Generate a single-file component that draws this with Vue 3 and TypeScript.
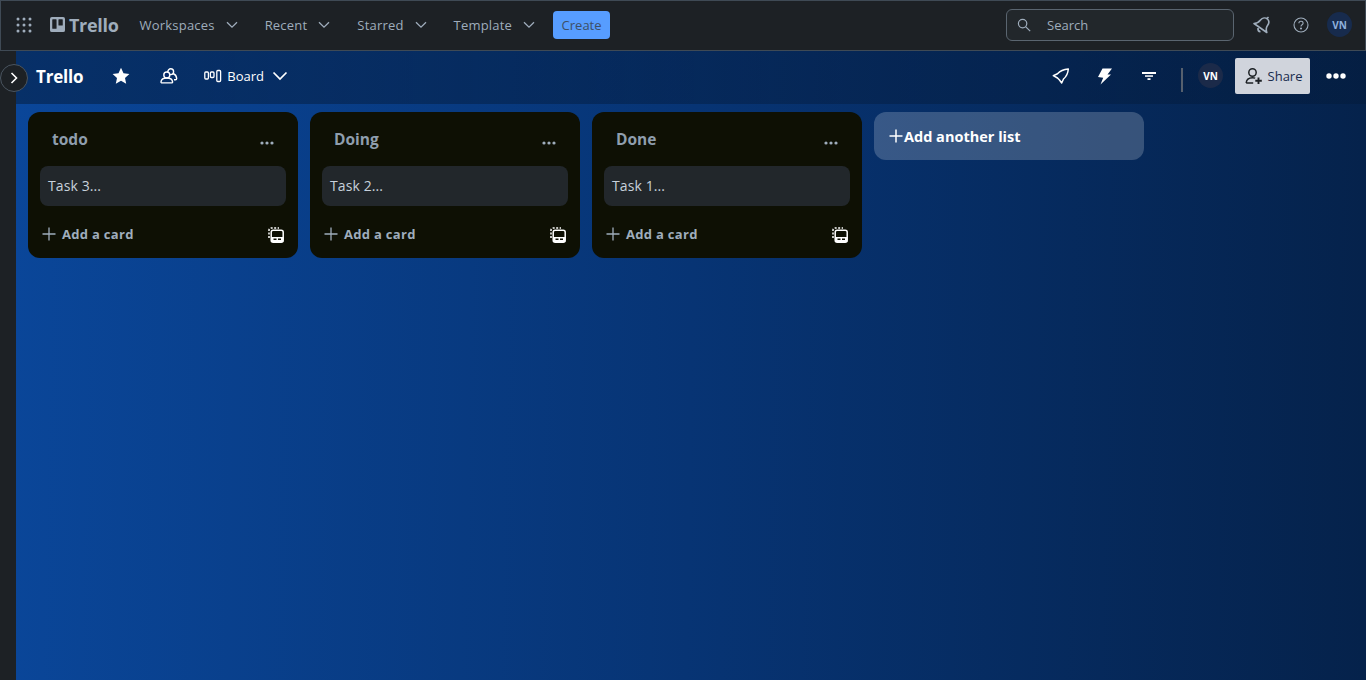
<template>
  <div class="app">
    <header class="topbar">
      <button class="icon-btn apps" aria-label="Apps">
        <svg width="16" height="16" viewBox="0 0 16 16" fill="currentColor">
          <circle v-for="d in appDots" :key="d.x + '-' + d.y" :cx="d.x" :cy="d.y" r="1.5" />
        </svg>
      </button>
      <div class="logo">
        <svg width="15" height="15" viewBox="0 0 16 16">
          <path fill="currentColor" fill-rule="evenodd" d="M2 0h12a2 2 0 0 1 2 2v12a2 2 0 0 1-2 2H2a2 2 0 0 1-2-2V2a2 2 0 0 1 2-2Zm1 2.400a.6.6 0 0 0-.6.6v9a.6.6 0 0 0 .6.6h3.400a.6.6 0 0 0 .6-.6V3a.6.6 0 0 0-.6-.6Zm6.600 0a.6.6 0 0 0-.6.6v5.400a.6.6 0 0 0 .6.6H13a.6.6 0 0 0 .6-.6V3a.6.6 0 0 0-.6-.6Z" />
        </svg>
        <span>Trello</span>
      </div>
      <nav class="menu">
        <button v-for="item in menu" :key="item" class="menu-item">
          <span>{{ item }}</span>
          <svg width="14" height="14" viewBox="0 0 14 14" fill="none" stroke="currentColor" stroke-width="1.300">
            <path d="M2 4.200 7 9.200l5-5" />
          </svg>
        </button>
      </nav>
      <button class="create">Create</button>
      <div class="search">
        <svg width="14" height="14" viewBox="0 0 14 14" fill="none" stroke="currentColor" stroke-width="1.200">
          <circle cx="5.600" cy="5.600" r="4.200" />
          <path d="m8.800 8.800 4.400 4.400" />
        </svg>
        <span>Search</span>
      </div>
      <button class="icon-btn bell" aria-label="Notifications">
        <svg width="20" height="20" viewBox="0 0 20 20" fill="none" stroke="currentColor" stroke-width="1.600" stroke-linejoin="round">
          <path d="M2 8.500C5 8.500 7 7 8.500 5c2-2.500 5-2.500 7-1 1.800 1.800 1.500 4.500 0 6.500-1.500 2-1.500 4.500-.7 7Z" />
          <path d="M6 13c-.3 2 .7 3.500 2.500 3.800" />
          <path d="m15 3.500 1.500-1.500" />
        </svg>
      </button>
      <button class="icon-btn help" aria-label="Help">
        <svg width="16" height="16" viewBox="0 0 16 16" fill="none" stroke="currentColor" stroke-width="1.100">
          <circle cx="8" cy="8" r="7" />
          <path d="M5.900 6.300c0-1.200.9-2 2.100-2s2.100.8 2.100 1.900c0 1.600-2.100 1.600-2.100 3.200" />
          <circle cx="8" cy="11.500" r=".5" fill="currentColor" />
        </svg>
      </button>
      <div class="avatar avatar-top">VN</div>
    </header>

    <div class="body">
      <aside class="rail"></aside>
      <main class="board">
        <button class="rail-toggle" aria-label="Expand sidebar">
          <svg width="10" height="12" viewBox="0 0 10 12" fill="none" stroke="currentColor" stroke-width="1.600">
            <path d="m2.500 1 5 5-5 5" />
          </svg>
        </button>
        <div class="board-bar">
          <h1 class="board-name">Trello</h1>
          <svg class="star" width="18" height="18" viewBox="0 0 18 18" fill="currentColor">
            <path d="m9 .8 2.500 5.400 5.900.7-4.400 4 1.200 5.800L9 13.800l-5.200 2.900L5 10.900.6 6.900l5.900-.7Z" />
          </svg>
          <svg class="people" width="18" height="18" viewBox="0 0 18 18" fill="none" stroke="currentColor" stroke-width="1.400">
            <circle cx="10.700" cy="4.700" r="2.900" />
            <path d="M13.200 6.500c2 .8 3.300 2.700 3.500 5 0 .9-.5 1.300-1.300 1.300H14" />
            <circle cx="6.800" cy="8" r="3" fill="#06296a" />
            <path d="M1 14.800c.3-2.400 2-3.800 5.800-3.800s5.500 1.400 5.800 3.800c.1.700-.3 1.100-1 1.100H2c-.7 0-1.100-.4-1-1.100Z" />
          </svg>
          <div class="view">
            <svg width="18" height="14" viewBox="0 0 18 14" fill="none" stroke="currentColor" stroke-width="1.300">
              <rect x=".8" y="3" width="3.600" height="7" rx="1" />
              <rect x="6.400" y="3" width="3.600" height="5.500" rx="1" />
              <rect x="12.800" y="1.500" width="3.800" height="11" rx="1" />
            </svg>
            <span>Board</span>
            <svg width="16" height="16" viewBox="0 0 16 16" fill="none" stroke="currentColor" stroke-width="1.700">
              <path d="m1.500 4.500 6.500 6.500 6.500-6.500" />
            </svg>
          </div>
          <div class="bar-right">
            <svg class="tool" width="18" height="18" viewBox="0 0 18 18" fill="none" stroke="currentColor" stroke-width="1.500" stroke-linejoin="round">
              <path d="M16.300 2C11 2.500 8 4 5.500 6.700L1.300 8.700 5.500 11l2 2 2.200 3 1.800-4c3-2.500 4.500-6 4.800-10Z" />
            </svg>
            <svg class="tool" width="18" height="18" viewBox="0 0 18 18" fill="currentColor">
              <path d="M6.500 1.500H16L11.500 7.500H15L4.500 17.500l2.700-6.700-5.200-.8Z" />
            </svg>
            <svg class="tool" width="18" height="18" viewBox="0 0 18 18" fill="currentColor">
              <rect x="2" y="5" width="14" height="2" />
              <rect x="5" y="8.300" width="8" height="1.500" />
              <rect x="7.500" y="11.200" width="3" height="1.800" />
            </svg>
            <span class="divider"></span>
            <div class="avatar avatar-bar">VN</div>
            <button class="share">
              <svg width="18" height="18" viewBox="0 0 18 18" fill="none" stroke="currentColor" stroke-width="1.500">
                <circle cx="7.500" cy="5.500" r="3.700" />
                <path d="M1.200 16c.2-3.800 2.600-5.300 6.300-5.300 1 0 1.900.1 2.700.4" />
                <path d="M1.200 16h7" />
                <path d="M13.500 10.500v6.500M10.300 13.800h6.500" stroke-width="1.900" />
              </svg>
              <span>Share</span>
            </button>
            <svg class="more" width="20" height="6" viewBox="0 0 20 6" fill="currentColor">
              <circle cx="3" cy="3" r="2.700" />
              <circle cx="10" cy="3" r="2.700" />
              <circle cx="17" cy="3" r="2.700" />
            </svg>
          </div>
        </div>

        <div class="lists">
          <section v-for="list in lists" :key="list.title" class="list">
            <div class="list-head">
              <h2>{{ list.title }}</h2>
              <svg width="14" height="4" viewBox="0 0 14 4" fill="currentColor">
                <circle cx="2" cy="2" r="1.600" />
                <circle cx="7" cy="2" r="1.600" />
                <circle cx="12" cy="2" r="1.600" />
              </svg>
            </div>
            <div class="card">{{ list.card }}</div>
            <div class="list-foot">
              <button class="add-card">
                <svg width="14" height="14" viewBox="0 0 14 14" stroke="currentColor" stroke-width="1.300">
                  <path d="M7 .5v13M.5 7h13" />
                </svg>
                <span>Add a card</span>
              </button>
              <svg class="template" width="16" height="16" viewBox="0 0 16 16" fill="none" stroke="currentColor">
                <path d="M1 11V3a2 2 0 0 1 2-2h8" stroke-width="1.500" stroke-dasharray="2 1.500" />
                <rect x="3.200" y="3.200" width="12" height="12" rx="2" stroke-width="1.500" />
                <rect x="3.200" y="10" width="12" height="5" fill="currentColor" stroke="none" />
                <rect x="5.500" y="11.500" width="3" height="1.500" fill="#0e1004" stroke="none" />
                <rect x="10" y="11.500" width="3" height="1.500" fill="#0e1004" stroke="none" />
              </svg>
            </div>
          </section>
          <button class="add-list">
            <svg width="14" height="14" viewBox="0 0 14 14" stroke="currentColor" stroke-width="1.500">
              <path d="M7 .5v13M.5 7h13" />
            </svg>
            <span>Add another list</span>
          </button>
        </div>
      </main>
    </div>
  </div>
</template>

<script setup lang="ts">
interface BoardList {
  title: string
  card: string
}

const menu: string[] = ['Workspaces', 'Recent', 'Starred', 'Template']

const lists: BoardList[] = [
  { title: 'todo', card: 'Task 3...' },
  { title: 'Doing', card: 'Task 2...' },
  { title: 'Done', card: 'Task 1...' },
]

const appDots = [2, 8, 14].flatMap((y) => [2, 8, 14].map((x) => ({ x, y })))
</script>

<style>
html,
body {
  margin: 0;
  height: 100%;
  overflow: hidden;
}
</style>

<style scoped>
* {
  box-sizing: border-box;
}

button {
  font: inherit;
  border: 0;
  background: none;
  color: inherit;
  padding: 0;
}

.app {
  height: 680px;
  display: flex;
  flex-direction: column;
  font-family: "Open Sans", "Noto Sans", sans-serif;
  background: #1d2125;
}

.topbar {
  height: 51px;
  flex: none;
  display: flex;
  align-items: center;
  padding: 0 13px 2px 15px;
  border: 1px solid #3f4a55;
  background: #1d2125;
  color: #9fadbc;
}

.icon-btn {
  display: flex;
}

.apps {
  margin-right: 18px;
}

.logo {
  display: flex;
  align-items: center;
  gap: 4px;
  font-size: 18px;
  font-weight: 700;
  letter-spacing: -0.3px;
  margin-right: 21px;
  color: #9fadbc;
}

.menu {
  display: flex;
  gap: 26px;
}

.menu-item {
  display: flex;
  align-items: center;
  gap: 10px;
  font-size: 13px;
  font-weight: 500;
  letter-spacing: 0.2px;
}

.create {
  margin-left: 17px;
  width: 57px;
  height: 28px;
  border-radius: 4px;
  background: #579dff;
  color: #3d4f66;
  font-size: 13px;
  font-weight: 500;
}

.search {
  margin-left: auto;
  width: 228px;
  height: 32px;
  display: flex;
  align-items: center;
  gap: 16px;
  padding-left: 10px;
  border: 1px solid #5a6570;
  border-radius: 6px;
  background: #22272b;
  font-size: 13px;
  font-weight: 500;
}

.search svg {
  color: #9fadbc;
}

.bell {
  margin-left: 18px;
}

.help {
  margin-left: 21px;
}

.avatar {
  display: flex;
  align-items: center;
  justify-content: center;
  border-radius: 50%;
  font-weight: 700;
  font-size: 10px;
}

.avatar-top {
  width: 25px;
  height: 25px;
  margin-left: 18px;
  background: #172b4d;
  color: #8fb0dc;
}

.body {
  flex: 1;
  display: flex;
  min-height: 0;
}

.rail {
  width: 16px;
  flex: none;
  background: #1d2125;
}

.board {
  flex: 1;
  position: relative;
  background: linear-gradient(91deg, #0a4699 0%, #073474 50%, #05224b 100%);
}

.rail-toggle {
  position: absolute;
  left: -16px;
  top: 13px;
  width: 28px;
  height: 28px;
  display: flex;
  align-items: center;
  justify-content: center;
  border-radius: 50%;
  border: 1px solid #4a5560;
  background: #1d2125;
  color: #fff;
}

.board-bar {
  height: 53px;
  display: flex;
  align-items: center;
  padding: 0 20px 4px 20px;
  background: linear-gradient(90deg, rgba(0, 0, 0, 0.32), rgba(0, 0, 0, 0.12));
  color: #fff;
}

.board-name {
  margin: 2px 0 0;
  font-size: 17px;
  font-weight: 700;
  letter-spacing: -0.2px;
}

.star {
  margin-left: 29px;
}

.people {
  margin-left: 30px;
}

.view {
  margin-left: 26px;
  display: flex;
  align-items: center;
  gap: 5px;
  font-size: 13px;
  font-weight: 500;
}

.view svg:last-child {
  margin-left: 3px;
}

.bar-right {
  margin-left: auto;
  display: flex;
  align-items: center;
}

.tool {
  margin-right: 26px;
}

.divider {
  width: 2px;
  height: 24px;
  margin: 8px 15px 0 -3px;
  background: #56606e;
}

.avatar-bar {
  width: 25px;
  height: 25px;
  background: #1b2a49;
  color: #fff;
  margin-right: 12px;
}

.share {
  width: 75px;
  height: 36px;
  display: flex;
  align-items: center;
  justify-content: center;
  gap: 5px;
  padding-left: 2px;
  border-radius: 2px;
  background: #d0d4dc;
  color: #172b4d;
  font-size: 13px;
}

.share svg {
  color: #1d2125;
}

.more {
  margin-left: 16px;
}

.lists {
  display: flex;
  align-items: flex-start;
  gap: 12px;
  padding: 8px 12px;
}

.list {
  width: 270px;
  height: 146px;
  padding: 0 12px;
  border-radius: 12px;
  background: #0e1004;
  color: #9fadbc;
}

.list-head {
  height: 54px;
  display: flex;
  align-items: center;
  justify-content: space-between;
  padding: 0 12px;
}

.list-head h2 {
  margin: 0 0 1px;
  font-size: 15.5px;
  font-weight: 700;
  color: #8f9eae;
}

.list-head svg {
  margin-top: 8px;
}

.card {
  height: 40px;
  padding: 0 8px 2px;
  display: flex;
  align-items: center;
  border-radius: 8px;
  background: #22272b;
  color: #c7d1db;
  font-size: 14px;
  letter-spacing: 0.1px;
}

.list-foot {
  height: 56px;
  display: flex;
  align-items: center;
  justify-content: space-between;
  padding-right: 2px;
}

.add-card {
  display: flex;
  align-items: center;
  gap: 6px;
  margin-left: 2px;
  font-size: 13px;
  font-weight: 700;
  letter-spacing: 0.3px;
}

.template {
  color: #fff;
  margin-top: 2px;
}

.add-list {
  width: 270px;
  height: 48px;
  display: flex;
  align-items: center;
  gap: 1px;
  padding-left: 15px;
  border-radius: 12px;
  background: rgba(255, 255, 255, 0.2);
  color: #fff;
  font-size: 14.5px;
  font-weight: 700;
}
</style>
